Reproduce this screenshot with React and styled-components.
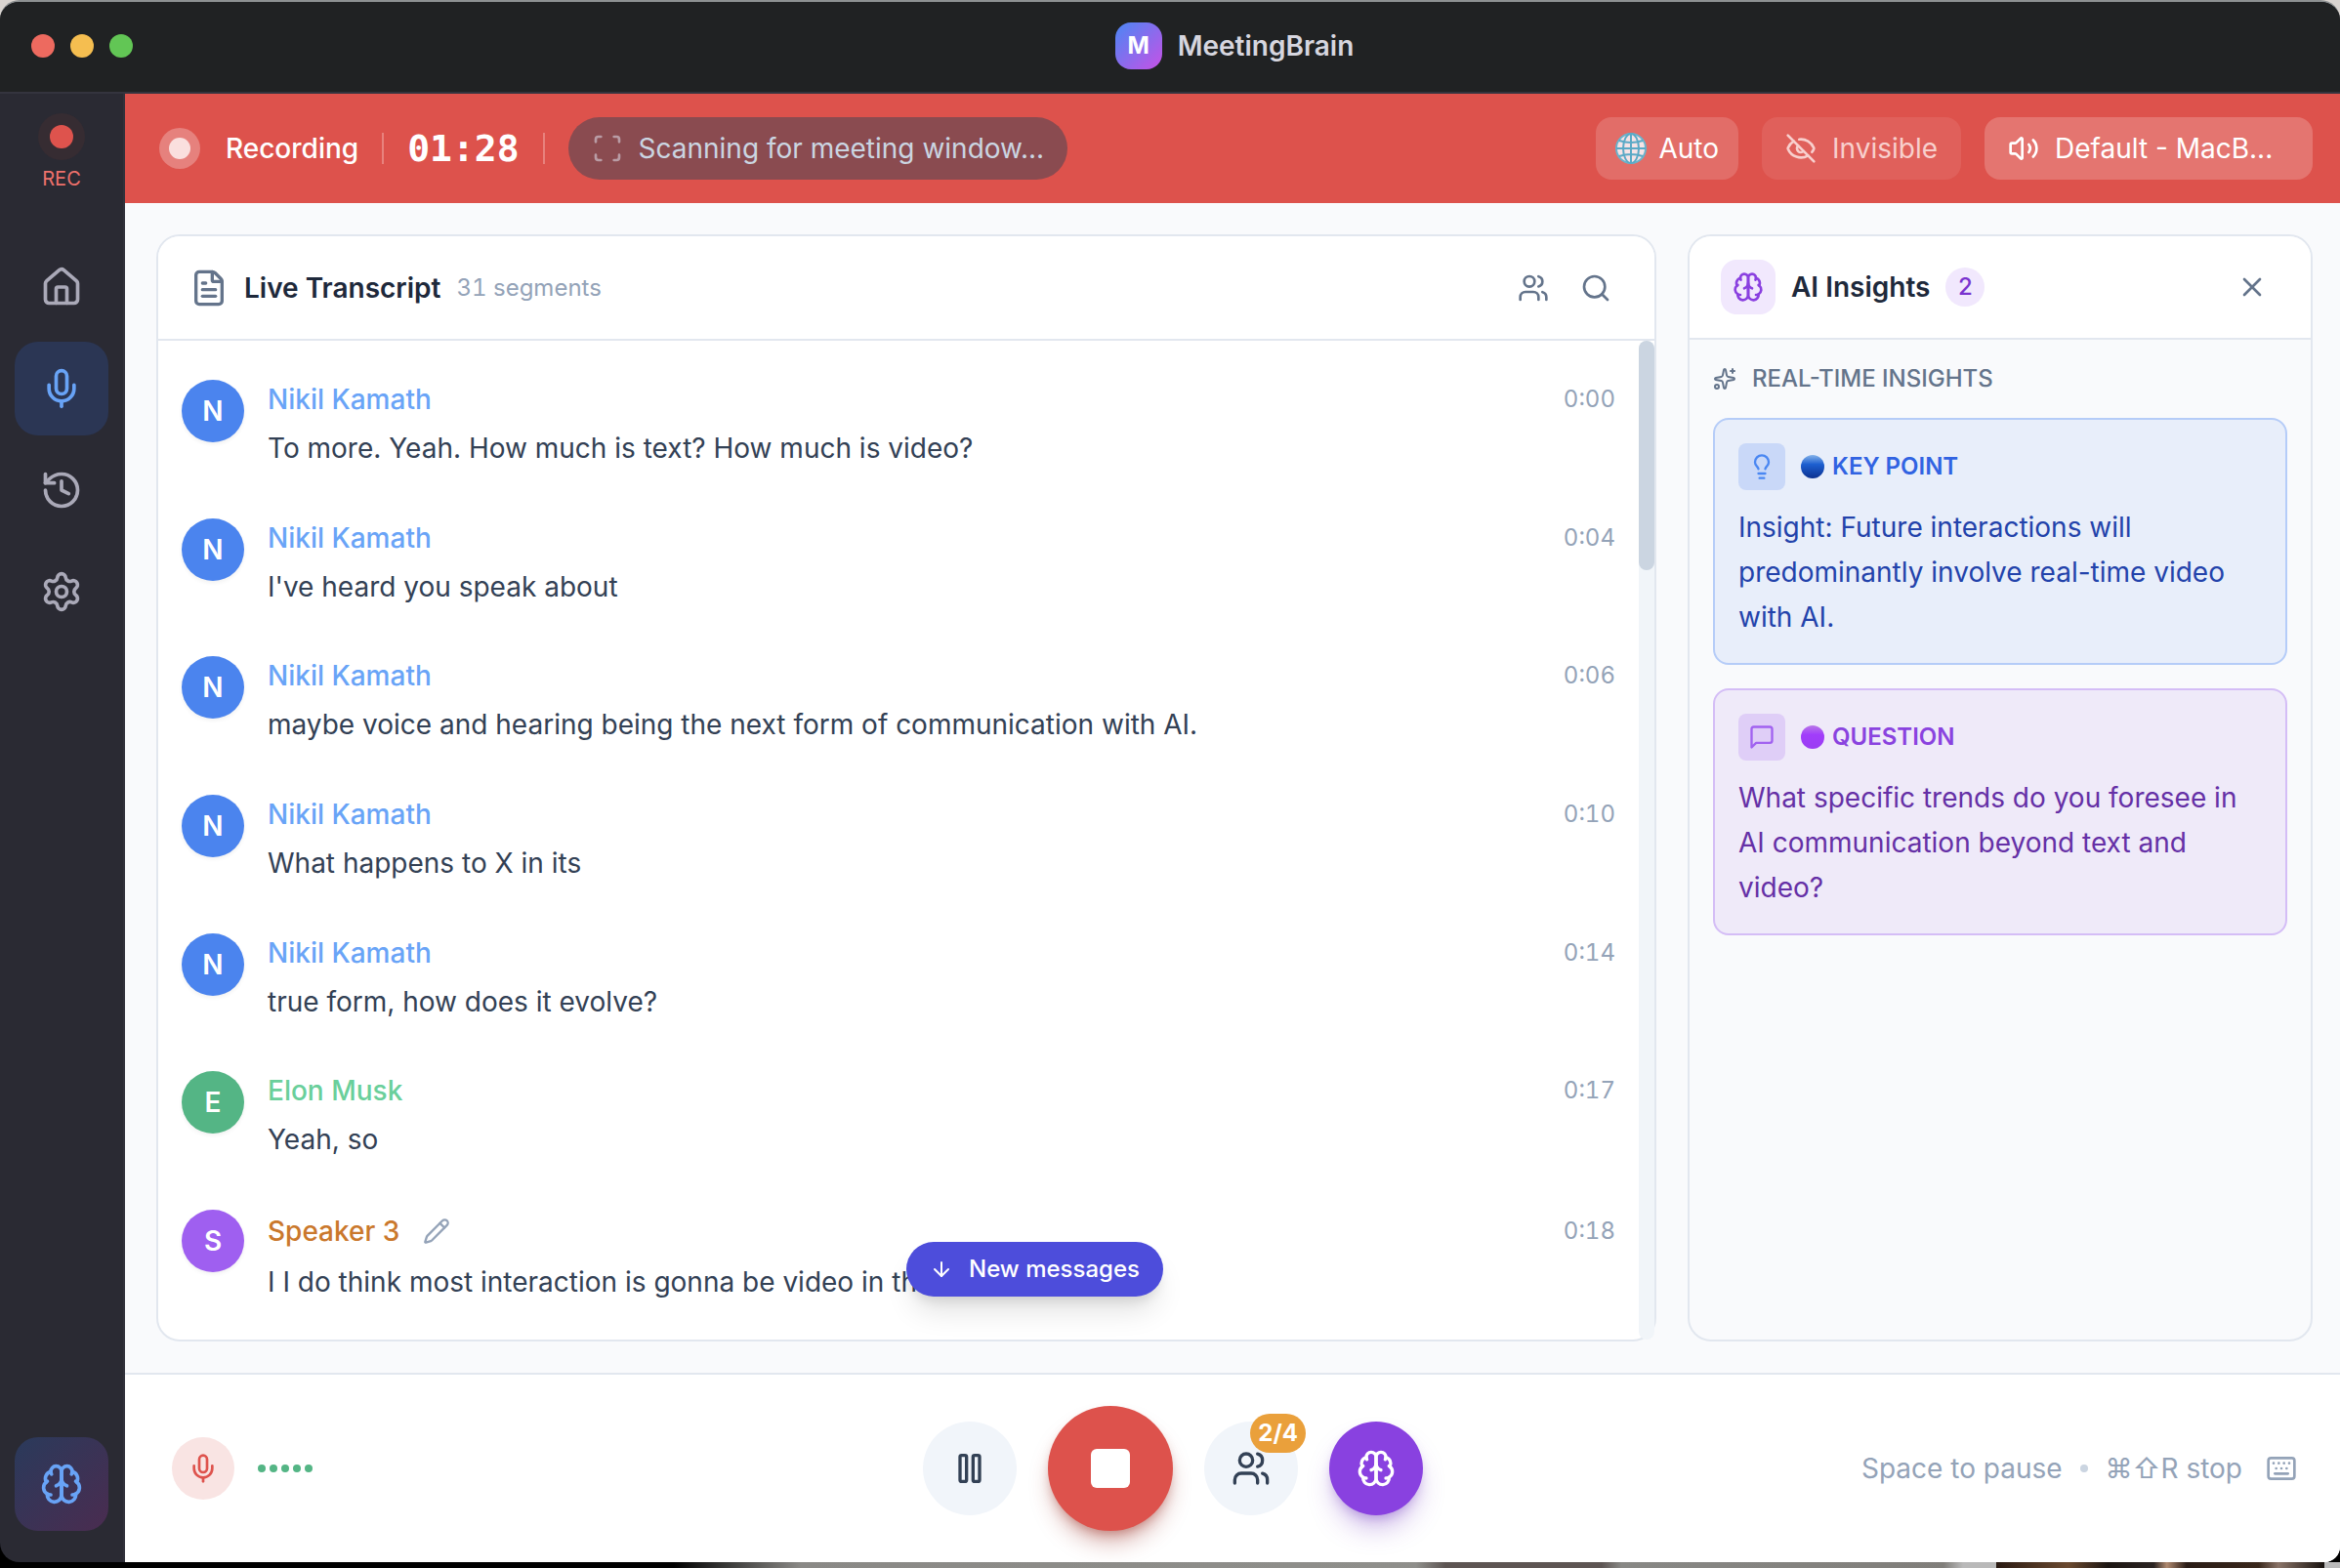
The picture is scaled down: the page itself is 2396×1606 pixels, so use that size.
import React from 'react';
import styled, { createGlobalStyle, css } from 'styled-components';
import {
  ArrowDown,
  EyeOff,
  FileText,
  History,
  House,
  Keyboard,
  Lightbulb,
  Mic,
  Pencil,
  Scan,
  Search,
  Settings,
  Sparkles,
  Users,
  Volume2,
  X
} from 'lucide-react';

const GlobalStyle = createGlobalStyle`
  *, *::before, *::after {
    box-sizing: border-box;
  }
  body {
    margin: 0;
    background: #000;
    font-family: 'Inter', 'Liberation Sans', sans-serif;
    font-size: 28px;
    line-height: 40px;
    -webkit-font-smoothing: antialiased;
  }
  button {
    font: inherit;
    border: 0;
    padding: 0;
    cursor: pointer;
  }
  h1, h2, h3, p, ul, ol {
    margin: 0;
    padding: 0;
    font-size: inherit;
    font-weight: inherit;
    list-style: none;
  }
  svg {
    flex: none;
    display: block;
  }
`;

/* ---------- window ---------- */

const Desktop = styled.div`
  min-height: 100vh;
  display: flex;
  flex-direction: column;
  padding-bottom: 6px;
  background:
    linear-gradient(90deg, #2a1a12 0%, #6b4a30 22%, #1c1512 34%, #2b2422 48%, #b08a70 52%, #2a1c16 58%, #3a281c 80%, #8a7468 86%, #17110e 100%) 2044px 100% / 336px 6px no-repeat,
    linear-gradient(90deg, #000 0 690px, #8a8986 820px, #8f8f8b 1450px, #5d5553 1480px, #5d5553 1640px, #888885 1660px, #807e7a 1990px, #b9b9b9 2010px) 0 100% / 100% 6px no-repeat,
    linear-gradient(#d9d4d0 50%, #000 50%);
`;

const Window = styled.div`
  flex: 1;
  display: flex;
  flex-direction: column;
  overflow: hidden;
  border-top: 2px solid #8d9192;
  border-radius: 20px 20px 16px 20px;
  background: #2a2a33;
`;

const TitleBar = styled.header`
  display: flex;
  align-items: center;
  height: 94px;
  padding: 0 4px 2px 32px;
  background: #202223;
  border-bottom: 2px solid #34343e;
`;

const Lights = styled.div`
  flex: none;
  display: flex;
  gap: 16px;
`;

const Light = styled.button`
  width: 24px;
  height: 24px;
  border-radius: 50%;
  background: ${({ color }) => color};
`;

const Brand = styled.div`
  flex: 1;
  display: flex;
  align-items: center;
  justify-content: center;
  gap: 16px;
`;

const Logo = styled.span`
  display: flex;
  align-items: center;
  justify-content: center;
  width: 48px;
  height: 48px;
  border-radius: 16px;
  background: linear-gradient(135deg, #4a87f4, #c751e6);
  color: #fff;
  font-size: 24px;
  font-weight: 700;
`;

const BrandName = styled.h1`
  color: #d6d6df;
  font-weight: 600;
`;

const Body = styled.div`
  flex: 1;
  display: flex;
`;

/* ---------- sidebar ---------- */

const Sidebar = styled.nav`
  display: flex;
  flex-direction: column;
  align-items: center;
  gap: 8px;
  width: 128px;
  padding: 20px 0 32px;
  border-right: 2px solid #31313b;
`;

const RecStatus = styled.div`
  display: flex;
  flex-direction: column;
  align-items: center;
  gap: 5px;
  margin-bottom: 41px;
  color: #ee716c;
  font-size: 20px;
  line-height: 28px;
`;

const RecHalo = styled.span`
  display: flex;
  align-items: center;
  justify-content: center;
  width: 48px;
  height: 48px;
  border-radius: 50%;
  background: #362c32;

  &::after {
    content: '';
    width: 24px;
    height: 24px;
    border-radius: 50%;
    background: #de534d;
  }
`;

const NavButton = styled.button`
  display: flex;
  align-items: center;
  justify-content: center;
  width: 96px;
  height: 96px;
  border-radius: 24px;
  background: ${({ $active }) => ($active ? '#2b3654' : 'transparent')};
  color: ${({ $active }) => ($active ? '#68a3f6' : '#aaa9b8')};
`;

const BrainNavButton = styled(NavButton)`
  margin-top: auto;
  background: linear-gradient(135deg, #2a3a5b, #4a2c50);
  color: #68a3f6;
`;

const Content = styled.div`
  flex: 1;
  min-width: 0;
  display: flex;
  flex-direction: column;
  background: #f9fafc;
`;

/* ---------- recording bar ---------- */

const RecordingBar = styled.div`
  display: flex;
  align-items: center;
  gap: 24px;
  height: 112px;
  padding: 0 28px 0 35px;
  background: #dd524c;
  color: #fff;
`;

const Pulse = styled.span`
  display: flex;
  align-items: center;
  justify-content: center;
  width: 42px;
  height: 42px;
  border-radius: 50%;
  background: #e6817d;

  &::after {
    content: '';
    width: 22px;
    height: 22px;
    border-radius: 50%;
    background: #fadfde;
  }
`;

const RecordingLabel = styled.span`
  margin-left: 2px;
  font-weight: 500;
`;

const Divider = styled.span`
  width: 2px;
  height: 32px;
  background: #e8827d;
`;

const Timer = styled.time`
  font-family: 'DejaVu Sans Mono', 'Liberation Mono', monospace;
  font-size: 38px;
  font-weight: 700;
`;

const ScanPill = styled.div`
  display: flex;
  align-items: center;
  gap: 16px;
  height: 64px;
  padding: 0 24px;
  border-radius: 32px;
  background: #8a4b50;
  color: #cbd5e1;

  svg {
    color: #b99ca5;
  }
`;

const BarActions = styled.div`
  display: flex;
  gap: 24px;
  margin-left: auto;
`;

const BarButton = styled.button`
  display: flex;
  align-items: center;
  gap: ${({ $gap }) => $gap || '16px'};
  height: 64px;
  padding: 0 ${({ $pad }) => $pad || '24px'};
  border-radius: 16px;
  background: ${({ $bg }) => $bg};
  color: ${({ $faded }) => ($faded ? '#f8cfcd' : '#fff')};
`;

const DeviceButton = styled(BarButton)`
  width: 336px;
`;

/* ---------- panels ---------- */

const Main = styled.main`
  flex: 1;
  display: grid;
  grid-template-columns: minmax(0, 1fr) 640px;
  gap: 32px;
  padding: 32px 28px 32px 32px;
`;

const Panel = styled.section`
  position: relative;
  display: flex;
  flex-direction: column;
  border: 2px solid #e2e7ef;
  border-radius: 24px;
  background: ${({ $bg }) => $bg || '#fff'};
`;

const PanelHeader = styled.header`
  display: flex;
  align-items: center;
  gap: 16px;
  height: ${({ $height }) => $height || '106px'};
  padding: 0 28px 0 32px;
  border-bottom: 2px solid #e2e7ef;
  border-radius: 22px 22px 0 0;
  background: #fff;
  color: #64748b;
`;

const PanelTitle = styled.h2`
  color: #1e293b;
  font-weight: 600;
`;

const Segments = styled.span`
  color: #94a3b8;
  font-size: 24px;
  font-variant-numeric: tabular-nums;
`;

const HeaderActions = styled.div`
  display: flex;
  margin-left: auto;
`;

const IconButton = styled.button`
  display: flex;
  align-items: center;
  justify-content: center;
  width: 64px;
  height: 64px;
  border-radius: 16px;
  background: transparent;
  color: #64748b;
`;

const HeaderIcon = styled.span`
  display: flex;
  align-items: center;
  justify-content: center;
  width: 56px;
  height: 56px;
  border-radius: 16px;
  background: #f1e8fd;
  color: #8a40e0;
`;

const Count = styled.span`
  min-width: 40px;
  border-radius: 20px;
  background: #f1e8fd;
  color: #7a34cf;
  font-size: 24px;
  font-weight: 500;
  text-align: center;
`;

/* ---------- transcript ---------- */

const TranscriptBody = styled.div`
  flex: 1;
  display: flex;
`;

const SegmentList = styled.ol`
  flex: 1;
  display: flex;
  flex-direction: column;
  justify-content: space-between;
  padding: 40px 24px 36px;
`;

const Segment = styled.li`
  display: flex;
  gap: 24px;
`;

const Avatar = styled.span`
  flex: none;
  display: flex;
  align-items: center;
  justify-content: center;
  width: 64px;
  height: 64px;
  border-radius: 50%;
  background: ${({ $bg }) => $bg};
  box-shadow: 0 2px 4px rgba(0, 0, 0, 0.06);
  color: #fff;
  font-weight: 600;
`;

const SegmentContent = styled.div`
  flex: 1;
`;

const SegmentTop = styled.div`
  display: flex;
  align-items: center;
  gap: 24px;
  margin-bottom: 7px;
`;

const SpeakerName = styled.h3`
  color: ${({ $color }) => $color};
  font-weight: 500;
`;

const RenameButton = styled.button`
  padding: 8px 0;
  background: transparent;
  color: #94a3b8;
`;

const Stamp = styled.time`
  margin-left: auto;
  color: #94a3b8;
  font-size: 24px;
  font-variant-numeric: tabular-nums;
`;

const Words = styled.p`
  color: #334155;
  line-height: 46px;
`;

const ScrollTrack = styled.div`
  width: 16px;
  border-radius: 8px;
  background: #f1f5f9;
`;

const ScrollThumb = styled.div`
  height: 23%;
  border-radius: 8px;
  background: #cbd5e1;
`;

const NewMessages = styled.button`
  position: absolute;
  left: 50%;
  bottom: 44px;
  display: flex;
  align-items: center;
  gap: 16px;
  height: 56px;
  padding: 0 24px;
  border-radius: 28px;
  background: #4d4ddb;
  box-shadow: 0 20px 30px -6px rgba(0, 0, 0, 0.12), 0 8px 12px -4px rgba(0, 0, 0, 0.1);
  color: #fff;
  font-size: 24px;
  font-weight: 500;
`;

/* ---------- insights ---------- */

const InsightsBody = styled.div`
  display: flex;
  flex-direction: column;
  gap: 24px;
  padding: 24px;
`;

const SectionLabel = styled.h3`
  display: flex;
  align-items: center;
  gap: 16px;
  color: #64748b;
  font-size: 24px;
  font-weight: 500;
  line-height: 32px;
  text-transform: uppercase;
`;

const tones = {
  blue: css`
    --bg: #e8eefa;
    --line: #b5ccf8;
    --chip: #c9d8f8;
    --icon: #4a87f2;
    --label: #3163e2;
    --text: #2343ab;
    --dot: linear-gradient(#86b4ea, #1d5fd0 40%, #0c3190);
  `,
  purple: css`
    --bg: #efeaf9;
    --line: #d4bdf6;
    --chip: #dfcef7;
    --icon: #a162f0;
    --label: #8a43df;
    --text: #6530a6;
    --dot: linear-gradient(#b877e8, #a13dfb 40%, #9b3df2);
  `
};

const Card = styled.article`
  ${({ $tone }) => tones[$tone]}
  padding: 24px;
  border: 2px solid var(--line);
  border-radius: 16px;
  background: var(--bg);
`;

const CardTop = styled.div`
  display: flex;
  align-items: center;
  gap: 16px;
  margin-bottom: 15px;
`;

const CardIcon = styled.span`
  display: flex;
  align-items: center;
  justify-content: center;
  width: 48px;
  height: 48px;
  border-radius: 8px;
  background: var(--chip);
  color: var(--icon);
`;

const CardLabel = styled.h3`
  display: flex;
  align-items: center;
  gap: 8px;
  color: var(--label);
  font-size: 24px;
  font-weight: 600;
  text-transform: uppercase;

  &::before {
    content: '';
    width: 24px;
    height: 24px;
    border-radius: 50%;
    background: var(--dot);
  }
`;

const CardText = styled.p`
  color: var(--text);
  line-height: 46px;
`;

/* ---------- footer ---------- */

const Footer = styled.footer`
  display: flex;
  align-items: center;
  justify-content: space-between;
  height: 194px;
  padding: 0 44px 0 48px;
  border-top: 2px solid #e2e7ef;
  background: #fff;
`;

const MicGroup = styled.div`
  display: flex;
  align-items: center;
  gap: 24px;
  width: 320px;
`;

const MicButton = styled.button`
  display: flex;
  align-items: center;
  justify-content: center;
  width: 64px;
  height: 64px;
  border-radius: 50%;
  background: #f9e4e3;
  color: #de534d;
`;

const Levels = styled.div`
  display: flex;
  gap: 4px;
`;

const Level = styled.span`
  width: 8px;
  height: 8px;
  border-radius: 50%;
  background: #54b585;
`;

const Controls = styled.div`
  display: flex;
  align-items: center;
  gap: 32px;
`;

const RoundButton = styled.button`
  position: relative;
  display: flex;
  align-items: center;
  justify-content: center;
  width: 96px;
  height: 96px;
  border-radius: 50%;
  background: #f1f5fa;
  color: #334155;
`;

const StopButton = styled(RoundButton)`
  width: 128px;
  height: 128px;
  background: #dd524c;
  box-shadow: 0 16px 24px -6px rgba(150, 40, 30, 0.4), 0 6px 12px -4px rgba(150, 40, 30, 0.4);

  &::after {
    content: '';
    width: 40px;
    height: 40px;
    border-radius: 6px;
    background: #fff;
  }
`;

const InsightsToggle = styled(RoundButton)`
  background: #8941e0;
  box-shadow: 0 18px 28px -6px rgba(110, 50, 190, 0.35), 0 6px 12px -4px rgba(110, 50, 190, 0.35);
  color: #fff;
`;

const Badge = styled.span`
  position: absolute;
  top: -8px;
  right: -8px;
  padding: 0 8px;
  border-radius: 20px;
  background: #eaa03b;
  color: #fff;
  font-size: 24px;
  font-weight: 700;
`;

const Shortcuts = styled.div`
  display: flex;
  align-items: center;
  gap: 18px;
  color: #94a3b8;

  svg {
    margin-left: 6px;
  }
`;

const Dot = styled.span`
  width: 8px;
  height: 8px;
  border-radius: 50%;
  background: #cbd5e1;
`;

/* ---------- custom icons ---------- */

const Glyph = ({ size, children }) => (
  <svg
    width={size}
    height={size}
    viewBox="0 0 24 24"
    fill="none"
    stroke="currentColor"
    strokeWidth="2"
    strokeLinecap="round"
    strokeLinejoin="round"
    aria-hidden="true"
  >
    {children}
  </svg>
);

const BrainIcon = ({ size }) => (
  <Glyph size={size}>
    <path d="M12 5a3 3 0 1 0-5.997.125 4 4 0 0 0-2.526 5.77 4 4 0 0 0 .556 6.588A4 4 0 1 0 12 18Z" />
    <path d="M12 5a3 3 0 1 1 5.997.125 4 4 0 0 1 2.526 5.77 4 4 0 0 1-.556 6.588A4 4 0 1 1 12 18Z" />
    <path d="M15 13a4.5 4.5 0 0 1-3-4 4.5 4.5 0 0 1-3 4" />
    <path d="M17.599 6.5a3 3 0 0 0 .399-1.375" />
    <path d="M6.003 5.125A3 3 0 0 0 6.401 6.5" />
    <path d="M3.477 10.896a4 4 0 0 1 .585-.396" />
    <path d="M19.938 10.5a4 4 0 0 1 .585.396" />
    <path d="M6 18a4 4 0 0 1-1.967-.516" />
    <path d="M19.967 17.484A4 4 0 0 1 18 18" />
  </Glyph>
);

const ChatIcon = ({ size }) => (
  <Glyph size={size}>
    <path d="M21 15a2 2 0 0 1-2 2H7l-4 4V5a2 2 0 0 1 2-2h14a2 2 0 0 1 2 2z" />
  </Glyph>
);

const PauseIcon = ({ size }) => (
  <Glyph size={size}>
    <rect x="14" y="4" width="4" height="16" rx="1" />
    <rect x="6" y="4" width="4" height="16" rx="1" />
  </Glyph>
);

const GlobeIcon = () => (
  <svg width="32" height="32" viewBox="0 0 32 32" fill="none" stroke="#5aa9c6" strokeWidth="2" aria-hidden="true">
    <circle cx="16" cy="16" r="15" fill="#f6e3e6" stroke="#69b4cd" />
    <path d="M16 1v30M1 16h30M4 8q12 4 24 0M4 24q12-4 24 0" />
    <ellipse cx="16" cy="16" rx="8" ry="15" />
  </svg>
);

/* ---------- data ---------- */

const nikil = { name: 'Nikil Kamath', color: '#69a4f7', bg: '#4b84ee' };
const elon = { name: 'Elon Musk', color: '#6acf9b', bg: '#54b585' };
const third = { name: 'Speaker 3', color: '#ca782c', bg: '#9f5ff0', unnamed: true };

const segments = [
  { speaker: nikil, time: '0:00', text: 'To more. Yeah. How much is text? How much is video?' },
  { speaker: nikil, time: '0:04', text: "I've heard you speak about" },
  { speaker: nikil, time: '0:06', text: 'maybe voice and hearing being the next form of communication with AI.' },
  { speaker: nikil, time: '0:10', text: 'What happens to X in its' },
  { speaker: nikil, time: '0:14', text: 'true form, how does it evolve?' },
  { speaker: elon, time: '0:17', text: 'Yeah, so' },
  { speaker: third, time: '0:18', text: 'I I do think most interaction is gonna be video in the' }
];

const insights = [
  {
    tone: 'blue',
    label: 'Key point',
    icon: <Lightbulb size={28} />,
    text: 'Insight: Future interactions will predominantly involve real-time video with AI.'
  },
  {
    tone: 'purple',
    label: 'Question',
    icon: <ChatIcon size={28} />,
    text: 'What specific trends do you foresee in AI communication beyond text and video?'
  }
];

const TranscriptPanel = () => (
  <Panel>
    <PanelHeader $height="107px">
      <FileText size={40} />
      <PanelTitle>Live Transcript</PanelTitle>
      <Segments>31 segments</Segments>
      <HeaderActions>
        <IconButton aria-label="Speakers">
          <Users size={32} />
        </IconButton>
        <IconButton aria-label="Search">
          <Search size={32} />
        </IconButton>
      </HeaderActions>
    </PanelHeader>
    <TranscriptBody>
      <SegmentList>
        {segments.map(({ speaker, time, text }) => (
          <Segment key={time}>
            <Avatar $bg={speaker.bg}>{speaker.name[0]}</Avatar>
            <SegmentContent>
              <SegmentTop>
                <SpeakerName $color={speaker.color}>{speaker.name}</SpeakerName>
                {speaker.unnamed && (
                  <RenameButton aria-label="Rename speaker">
                    <Pencil size={28} />
                  </RenameButton>
                )}
                <Stamp>{time}</Stamp>
              </SegmentTop>
              <Words>{text}</Words>
            </SegmentContent>
          </Segment>
        ))}
      </SegmentList>
      <ScrollTrack>
        <ScrollThumb />
      </ScrollTrack>
    </TranscriptBody>
    <NewMessages>
      <ArrowDown size={24} />
      New messages
    </NewMessages>
  </Panel>
);

const InsightsPanel = () => (
  <Panel $bg="#f9fafc">
    <PanelHeader>
      <HeaderIcon>
        <BrainIcon size={32} />
      </HeaderIcon>
      <PanelTitle>AI Insights</PanelTitle>
      <Count>2</Count>
      <HeaderActions>
        <IconButton aria-label="Close insights">
          <X size={32} />
        </IconButton>
      </HeaderActions>
    </PanelHeader>
    <InsightsBody>
      <SectionLabel>
        <Sparkles size={24} />
        Real-time insights
      </SectionLabel>
      {insights.map(({ tone, label, icon, text }) => (
        <Card key={label} $tone={tone}>
          <CardTop>
            <CardIcon>{icon}</CardIcon>
            <CardLabel>{label}</CardLabel>
          </CardTop>
          <CardText>{text}</CardText>
        </Card>
      ))}
    </InsightsBody>
  </Panel>
);

const App = () => (
  <Desktop>
    <GlobalStyle />
    <Window>
      <TitleBar>
        <Lights>
          <Light color="#ed6a5f" aria-label="Close" />
          <Light color="#f5be50" aria-label="Minimize" />
          <Light color="#62c655" aria-label="Zoom" />
        </Lights>
        <Brand>
          <Logo>M</Logo>
          <BrandName>MeetingBrain</BrandName>
        </Brand>
      </TitleBar>
      <Body>
        <Sidebar>
          <RecStatus>
            <RecHalo />
            REC
          </RecStatus>
          <NavButton aria-label="Home">
            <House size={44} />
          </NavButton>
          <NavButton $active aria-label="Record">
            <Mic size={44} />
          </NavButton>
          <NavButton aria-label="History">
            <History size={44} />
          </NavButton>
          <NavButton aria-label="Settings">
            <Settings size={44} />
          </NavButton>
          <BrainNavButton aria-label="AI assistant">
            <BrainIcon size={44} />
          </BrainNavButton>
        </Sidebar>
        <Content>
          <RecordingBar>
            <Pulse />
            <RecordingLabel>Recording</RecordingLabel>
            <Divider />
            <Timer>01:28</Timer>
            <Divider />
            <ScanPill>
              <Scan size={32} />
              Scanning for meeting window...
            </ScanPill>
            <BarActions>
              <BarButton $bg="#e26d68" $pad="20px" $gap="12px">
                <GlobeIcon />
                Auto
              </BarButton>
              <BarButton $bg="#e0605b" $faded>
                <EyeOff size={32} />
                Invisible
              </BarButton>
              <DeviceButton $bg="#e47570">
                <Volume2 size={32} />
                Default - MacB...
              </DeviceButton>
            </BarActions>
          </RecordingBar>
          <Main>
            <TranscriptPanel />
            <InsightsPanel />
          </Main>
          <Footer>
            <MicGroup>
              <MicButton aria-label="Mute microphone">
                <Mic size={32} />
              </MicButton>
              <Levels>
                {[0, 1, 2, 3, 4].map(i => (
                  <Level key={i} />
                ))}
              </Levels>
            </MicGroup>
            <Controls>
              <RoundButton aria-label="Pause">
                <PauseIcon size={40} />
              </RoundButton>
              <StopButton aria-label="Stop" />
              <RoundButton aria-label="Speakers, 2 of 4 named">
                <Users size={40} />
                <Badge>2/4</Badge>
              </RoundButton>
              <InsightsToggle aria-label="Toggle AI insights">
                <BrainIcon size={40} />
              </InsightsToggle>
            </Controls>
            <Shortcuts>
              <span>Space to pause</span>
              <Dot />
              <span>⌘⇧R stop</span>
              <Keyboard size={32} />
            </Shortcuts>
          </Footer>
        </Content>
      </Body>
    </Window>
  </Desktop>
);

export default App;
